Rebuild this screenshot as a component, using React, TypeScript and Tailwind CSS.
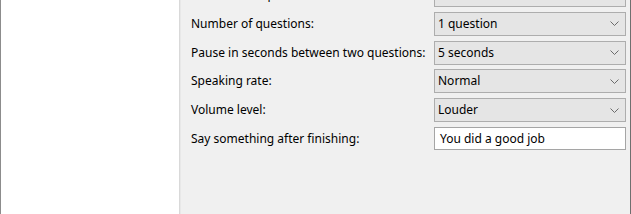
const rows: { label: string; value: string; kind: "combo" | "text" }[] = [
  { label: "Select math operation:", value: "Addition", kind: "combo" },
  { label: "Number of questions:", value: "1 question", kind: "combo" },
  { label: "Pause in seconds between two questions:", value: "5 seconds", kind: "combo" },
  { label: "Speaking rate:", value: "Normal", kind: "combo" },
  { label: "Volume level:", value: "Louder", kind: "combo" },
  { label: "Say something after finishing:", value: "You did a good job", kind: "text" },
];

function Chevron() {
  return (
    <svg width="9" height="5" viewBox="0 0 9 5" className="shrink-0">
      <path d="M0.5 0.5 L4.5 4.5 L8.5 0.5" fill="none" stroke="#6b6b6b" strokeWidth="1" />
    </svg>
  );
}

export default function App() {
  return (
    <div
      className="flex h-[214px] w-[631px] overflow-hidden bg-white text-[12px] text-black"
      style={{ fontFamily: '"Noto Sans", "Open Sans", sans-serif' }}
    >
      <div className="w-[179px] shrink-0 border-l border-[#8c8c8c] bg-white" />
      <div className="w-[2px] shrink-0 border-l border-[#d9d9d9] bg-[#e8e8e8]" />
      <div className="flex-1 border-r border-[#6f6f6f] bg-[#f0f0f0] pl-[10px] pr-[4px]">
        <div className="mt-[-17px] flex flex-col gap-[4.75px]">
          {rows.map((r) => (
            <div key={r.label} className="flex h-[24px] items-center">
              <div className="w-[243px] shrink-0 leading-none">{r.label}</div>
              {r.kind === "combo" ? (
                <div className="flex h-[24px] w-[192px] items-center justify-between border border-[#adadad] bg-[#e5e5e5] pl-[3px] pr-[6px]">
                  <span className="leading-none">{r.value}</span>
                  <Chevron />
                </div>
              ) : (
                <div className="flex h-[23px] w-[192px] items-center border border-[#a5a5a5] bg-white pl-[5px]">
                  <span className="leading-none">{r.value}</span>
                </div>
              )}
            </div>
          ))}
        </div>
      </div>
    </div>
  );
}
